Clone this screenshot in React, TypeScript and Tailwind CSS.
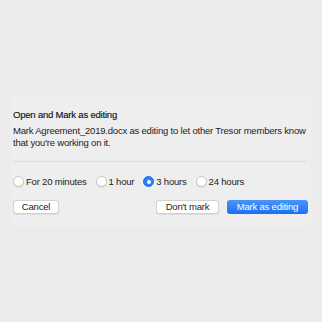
import { useState } from 'react';

const options = ['For 20 minutes', '1 hour', '3 hours', '24 hours'];

export default function App() {
  const [selected, setSelected] = useState('3 hours');

  return (
    <div
      className="w-[322px] h-[322px] bg-[#ececec] flex flex-col pt-[95px] px-[11px] text-[#222] tracking-[-0.2px]"
      style={{ fontFamily: '"Liberation Sans", Arial, sans-serif' }}
    >
      <div className="bg-[#eeeeee] h-[132px] px-[2px] pt-[14px]">
        <div className="text-[9.5px] leading-[11px] text-[#111] [-webkit-text-stroke:0.15px_#111]">Open and Mark as editing</div>
        <p className="mt-[5px] text-[9.5px] leading-[12px] whitespace-nowrap">
          Mark Agreement_2019.docx as editing to let other Tresor members know
          <br />
          that you're working on it.
        </p>
        <div className="mt-[12px] h-px bg-[#dcdcdc] mr-[2px]" />
        <div className="mt-[14px] flex items-center">
          {options.map((o, i) => (
            <label
              key={o}
              className={`flex items-center gap-[2px] text-[9.5px] leading-[11px] ${i > 0 ? 'ml-[9px]' : ''}`}
              onClick={() => setSelected(o)}
            >
              {selected === o ? (
                <span className="w-[11px] h-[11px] rounded-full bg-[#2a7df6] border border-[#2070e8] flex items-center justify-center">
                  <span className="w-[4px] h-[4px] rounded-full bg-white" />
                </span>
              ) : (
                <span className="w-[11px] h-[11px] rounded-full bg-white border border-[#c6c6c6] shadow-[0_0.5px_0.5px_rgba(0,0,0,0.1)]" />
              )}
              <span>{o}</span>
            </label>
          ))}
        </div>
        <div className="mt-[13px] flex items-center">
          <button className="w-[46px] h-[14px] bg-white border border-[#d2d2d2] rounded-[3px] text-[9.5px] leading-[12px] shadow-[0_0.5px_0.5px_rgba(0,0,0,0.15)]">
            Cancel
          </button>
          <div className="flex-1" />
          <button className="w-[63px] h-[14px] bg-white border border-[#d2d2d2] rounded-[3px] text-[9.5px] leading-[12px] shadow-[0_0.5px_0.5px_rgba(0,0,0,0.15)]">
            Don't mark
          </button>
          <button className="ml-[8px] mr-[1px] w-[81px] h-[14px] rounded-[3px] text-[9.5px] leading-[12px] text-white bg-gradient-to-b from-[#4a95f9] to-[#1a6ef5]">
            Mark as editing
          </button>
        </div>
      </div>
    </div>
  );
}
